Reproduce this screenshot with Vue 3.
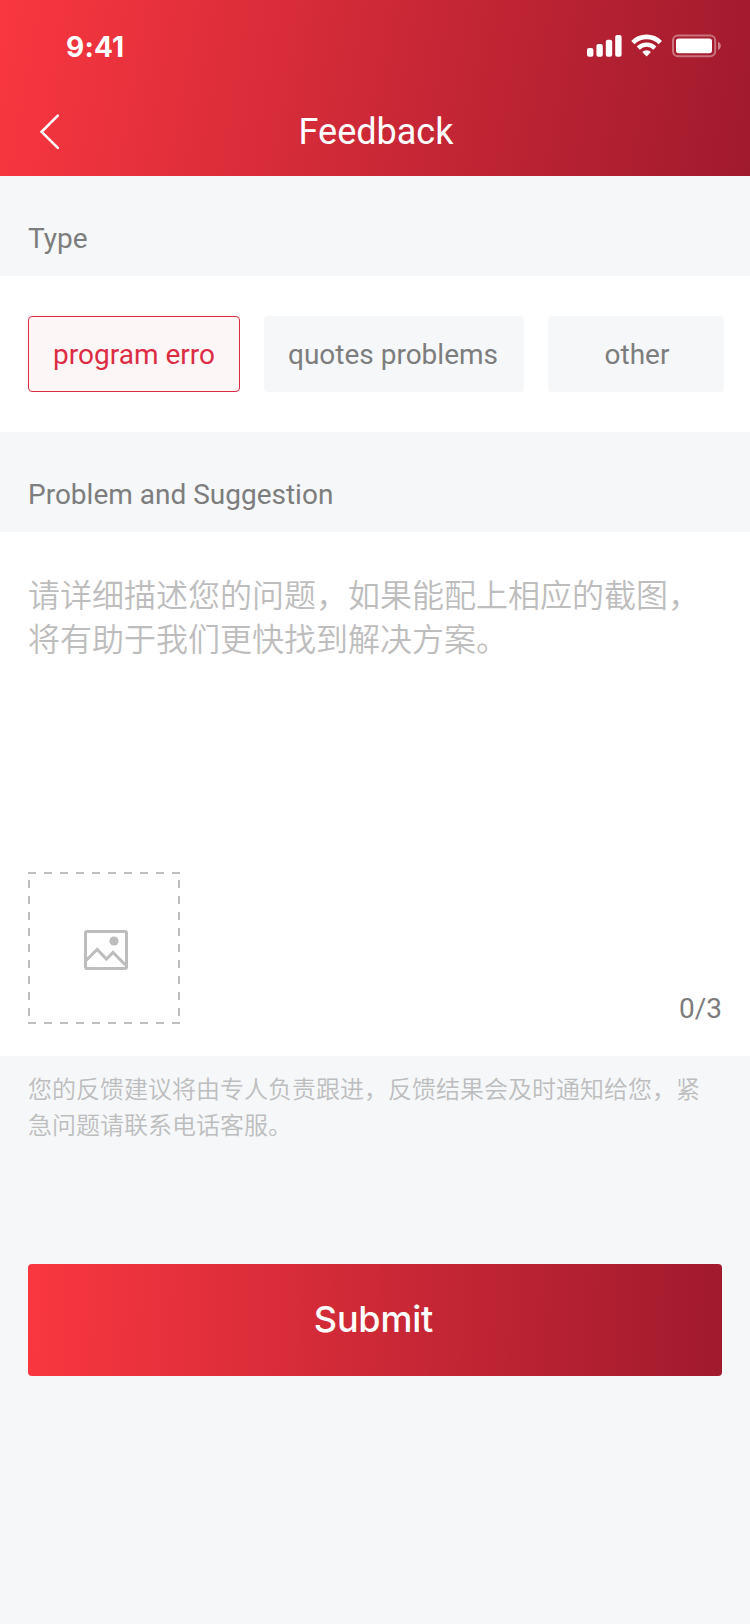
<script setup>
import { ref } from 'vue'

const types = [
  { id: 'program', label: 'program erro', width: 212 },
  { id: 'quotes', label: 'quotes problems', width: 260 },
  { id: 'other', label: 'other', width: 176 },
]
const selected = ref('program')
</script>

<template>
  <main class="page">
    <header class="header">
      <div class="status">
        <span class="time">9:41</span>
        <svg class="status-icons" width="136" height="26" viewBox="0 0 136 26" fill="#fff">
          <rect x="1" y="16" width="6.4" height="8.8" rx="2" />
          <rect x="10.4" y="12" width="6.4" height="12.8" rx="2" />
          <rect x="19.8" y="7.7" width="6.4" height="17.1" rx="2" />
          <rect x="29.2" y="3" width="6.4" height="21.8" rx="2" />
          <path d="M46.9 10.6a19.3 19.3 0 0 1 27.4 0" fill="none" stroke="#fff" stroke-width="4.7" />
          <path d="M52.3 16.1a11.7 11.7 0 0 1 16.6 0" fill="none" stroke="#fff" stroke-width="4.4" />
          <path d="M60.6 24.6l-4.4-4.5a6.2 6.2 0 0 1 8.8 0z" />
          <rect x="87" y="3.4" width="42.2" height="20.8" rx="5" fill="none" stroke="#fff" stroke-width="2" opacity=".38" />
          <rect x="90" y="6.4" width="36" height="14.8" rx="2.6" />
          <path d="M132 9.7c1.8.8 2.8 2.3 2.8 4.1s-1 3.3-2.8 4.1z" opacity=".45" />
        </svg>
      </div>
      <nav class="nav">
        <svg class="back" width="24" height="40" viewBox="0 0 24 40">
          <path d="M19.8 3.7L3.6 19.8l16.2 16" fill="none" stroke="#fff" stroke-width="2.6" stroke-linecap="round" />
        </svg>
        <h1>Feedback</h1>
      </nav>
    </header>

    <h2 class="section-title">Type</h2>
    <section class="types">
      <button
        v-for="t in types"
        :key="t.id"
        class="chip"
        :class="{ active: selected === t.id }"
        :style="{ width: t.width + 'px' }"
        @click="selected = t.id"
      >{{ t.label }}</button>
    </section>

    <h2 class="section-title">Problem and Suggestion</h2>
    <section class="editor">
      <p class="placeholder">请详细描述您的问题，如果能配上相应的截图，<br />将有助于我们更快找到解决方案。</p>
      <div class="attachments">
        <svg class="upload" width="152" height="152" viewBox="0 0 152 152" fill="none" stroke="#bdbdbd">
          <path d="M0 1h152M0 151h152" stroke-width="2" stroke-dasharray="8 8" />
          <path d="M1 8v144M151 8v144" stroke-width="2" stroke-dasharray="8 8" />
          <rect x="57.5" y="59.5" width="41" height="37" rx="1.5" stroke-width="3" />
          <path d="M58 88.5L69.2 77.4l9.3 9.7L85 80.5l13.5 13.5" stroke-width="3" />
          <circle cx="86" cy="69" r="4.6" fill="#bdbdbd" stroke="none" />
        </svg>
        <span class="count">0/3</span>
      </div>
    </section>

    <p class="note">您的反馈建议将由专人负责跟进，反馈结果会及时通知给您，紧急问题请联系电话客服。</p>
    <button class="submit">Submit</button>
  </main>
</template>

<style>
body {
  background: #f5f7f9;
}
</style>

<style scoped>
.page {
  width: 750px;
  height: 1624px;
  overflow: hidden;
  background: #f5f7f9;
  font-family: Roboto, "Noto Sans CJK SC", sans-serif;
  color: #7d7d7d;
}
h1, h2, p {
  margin: 0;
  font-weight: 400;
}
button {
  border: 0;
  padding: 0;
  font-family: inherit;
}
.header {
  height: 176px;
  background: linear-gradient(100deg, #f93740, #a01a2d);
  color: #fff;
}
.status {
  height: 88px;
  box-sizing: border-box;
  padding: 32px 28px 0 66px;
  display: flex;
  justify-content: space-between;
}
.time {
  font: 700 28px/30px Inter, sans-serif;
  letter-spacing: 0.2px;
}
.nav {
  height: 88px;
  display: grid;
  grid-template-columns: 86px 1fr 84px;
  align-items: center;
}
.back {
  margin-left: 38px;
}
h1 {
  font-size: 36px;
  line-height: 42px;
  text-align: center;
}
.section-title {
  height: 100px;
  box-sizing: border-box;
  padding: 46px 28px 0;
  font-size: 28px;
  line-height: 34px;
}
.types {
  height: 156px;
  background: #fff;
  display: flex;
  align-items: center;
  gap: 24px;
  padding-left: 28px;
  box-sizing: border-box;
}
.chip {
  height: 76px;
  box-sizing: border-box;
  flex: none;
  padding-top: 2px;
  border-radius: 4px;
  background: #f5f7f9;
  color: #7d7d7d;
  font-size: 28px;
  line-height: 34px;
}
.chip:nth-child(2) {
  padding-right: 2px;
}
.chip:nth-child(3) {
  padding-left: 2px;
}
.chip.active {
  border: 1px solid #dc2c44;
  background: #fdf6f7;
  color: #dc2c44;
}
.editor {
  height: 524px;
  box-sizing: border-box;
  padding: 39px 28px 32px;
  background: #fff;
  display: flex;
  flex-direction: column;
  justify-content: space-between;
}
.placeholder {
  font-family: "Noto Sans CJK SC", sans-serif;
  font-weight: 350;
  font-size: 32px;
  line-height: 44px;
  color: #bdbdbd;
  white-space: nowrap;
}
.attachments {
  display: flex;
  justify-content: space-between;
  align-items: flex-end;
}
.upload {
  display: block;
}
.count {
  font-size: 28px;
  line-height: 30px;
}
.note {
  padding: 14px 28px 0;
  font-family: "Noto Sans CJK SC", sans-serif;
  font-weight: 350;
  font-size: 24px;
  line-height: 36px;
  color: #bdbdbd;
}
.submit {
  display: block;
  width: 694px;
  height: 112px;
  margin: 122px 28px 0;
  padding: 0 3px 2px 0;
  border-radius: 4px;
  background: linear-gradient(92deg, #f93740, #a01a2d);
  color: #fff;
  font: 500 36px/44px Inter, sans-serif;
  letter-spacing: -0.2px;
}
</style>
